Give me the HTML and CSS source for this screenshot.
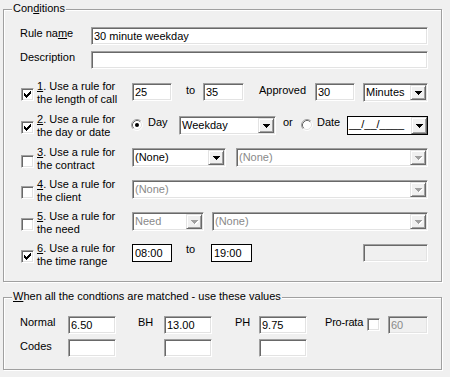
FILE: index.html
```html
<!DOCTYPE html>
<html>
<head>
<meta charset="utf-8">
<link rel="stylesheet" href="styles.css">
</head>
<body>
<div class="group conditions">
  <div class="gtitle">Con<u>d</u>itions</div>

  <div class="frow rule-row">
    <span class="flabel">Rule na<u>m</u>e</span>
    <input class="edit wide" type="text" value="30 minute weekday">
  </div>
  <div class="frow desc-row">
    <span class="flabel">Description</span>
    <input class="edit wide" type="text" value="">
  </div>

  <!-- 1 -->
  <div class="crow c1">
    <span class="chk"><svg width="11" height="11" viewBox="1 1 11 11" shape-rendering="crispEdges"><path fill="#000" d="M9 3h1v1h-1zM8 4h2v1h-2zM3 5h1v1h-1zM7 5h3v1h-3zM3 6h2v1h-2zM6 6h3v1h-3zM3 7h5v1h-5zM4 8h3v1h-3zM5 9h1v1h-1z"/></svg></span>
    <span class="clabel"><u>1</u>. Use a rule for<br>the length of call</span>
    <input class="edit len-from" type="text" value="25">
    <span class="txt to1">to</span>
    <input class="edit len-to" type="text" value="35">
    <span class="txt approved">Approved</span>
    <input class="edit appr" type="text" value="30">
    <div class="combo minutes"><span class="ctext">Minutes</span><span class="cbtn"><svg width="7" height="4" viewBox="0 0 7 4" shape-rendering="crispEdges"><path fill="#000" d="M0 0h7v1h-1v1h-1v1h-1v1h-1v-1h-1v-1h-1v-1h-1z"/></svg></span></div>
  </div>

  <!-- 2 -->
  <div class="crow c2">
    <span class="chk"><svg width="11" height="11" viewBox="1 1 11 11" shape-rendering="crispEdges"><path fill="#000" d="M9 3h1v1h-1zM8 4h2v1h-2zM3 5h1v1h-1zM7 5h3v1h-3zM3 6h2v1h-2zM6 6h3v1h-3zM3 7h5v1h-5zM4 8h3v1h-3zM5 9h1v1h-1z"/></svg></span>
    <span class="clabel"><u>2</u>. Use a rule for<br>the day or date</span>
    <span class="radio r-day"><svg width="12" height="12" viewBox="0 0 12 12"><circle cx="6" cy="6" r="5" fill="#fff"/><path d="M2.11 9.89A5.5 5.5 0 0 1 9.89 2.11" fill="none" stroke="#a0a0a0"/><path d="M9.89 2.11A5.5 5.5 0 0 1 2.11 9.89" fill="none" stroke="#fff"/><path d="M2.82 9.18A4.5 4.5 0 0 1 9.18 2.82" fill="none" stroke="#696969"/><path d="M9.18 2.82A4.5 4.5 0 0 1 2.82 9.18" fill="none" stroke="#e3e3e3"/><circle cx="6" cy="6" r="2" fill="#000"/></svg></span>
    <span class="txt day">Day</span>
    <div class="combo weekday"><span class="ctext">Weekday</span><span class="cbtn"><svg width="7" height="4" viewBox="0 0 7 4" shape-rendering="crispEdges"><path fill="#000" d="M0 0h7v1h-1v1h-1v1h-1v1h-1v-1h-1v-1h-1v-1h-1z"/></svg></span></div>
    <span class="txt or">or</span>
    <span class="radio r-date"><svg width="12" height="12" viewBox="0 0 12 12"><circle cx="6" cy="6" r="5" fill="#fff"/><path d="M2.11 9.89A5.5 5.5 0 0 1 9.89 2.11" fill="none" stroke="#a0a0a0"/><path d="M9.89 2.11A5.5 5.5 0 0 1 2.11 9.89" fill="none" stroke="#fff"/><path d="M2.82 9.18A4.5 4.5 0 0 1 9.18 2.82" fill="none" stroke="#696969"/><path d="M9.18 2.82A4.5 4.5 0 0 1 2.82 9.18" fill="none" stroke="#e3e3e3"/></svg></span>
    <span class="txt date">Date</span>
    <div class="combo flat datebox"><span class="ctext">__/__/____</span><span class="cbtn"><svg width="7" height="4" viewBox="0 0 7 4" shape-rendering="crispEdges"><path fill="#000" d="M0 0h7v1h-1v1h-1v1h-1v1h-1v-1h-1v-1h-1v-1h-1z"/></svg></span></div>
  </div>

  <!-- 3 -->
  <div class="crow c3">
    <span class="chk"></span>
    <span class="clabel"><u>3</u>. Use a rule for<br>the contract</span>
    <div class="combo contract"><span class="ctext">(None)</span><span class="cbtn"><svg width="7" height="4" viewBox="0 0 7 4" shape-rendering="crispEdges"><path fill="#000" d="M0 0h7v1h-1v1h-1v1h-1v1h-1v-1h-1v-1h-1v-1h-1z"/></svg></span></div>
    <div class="combo disabled contract2"><span class="ctext">(None)</span><span class="cbtn"><svg width="8" height="5" viewBox="0 0 8 5" shape-rendering="crispEdges"><path fill="#fff" d="M1 1h7v1h-1v1h-1v1h-1v1h-1v-1h-1v-1h-1v-1h-1z"/><path fill="#a0a0a0" d="M0 0h7v1h-1v1h-1v1h-1v1h-1v-1h-1v-1h-1v-1h-1z"/></svg></span></div>
  </div>

  <!-- 4 -->
  <div class="crow c4">
    <span class="chk"></span>
    <span class="clabel"><u>4</u>. Use a rule for<br>the client</span>
    <div class="combo disabled client"><span class="ctext">(None)</span><span class="cbtn"><svg width="8" height="5" viewBox="0 0 8 5" shape-rendering="crispEdges"><path fill="#fff" d="M1 1h7v1h-1v1h-1v1h-1v1h-1v-1h-1v-1h-1v-1h-1z"/><path fill="#a0a0a0" d="M0 0h7v1h-1v1h-1v1h-1v1h-1v-1h-1v-1h-1v-1h-1z"/></svg></span></div>
  </div>

  <!-- 5 -->
  <div class="crow c5">
    <span class="chk"></span>
    <span class="clabel"><u>5</u>. Use a rule for<br>the need</span>
    <div class="combo disabled need"><span class="ctext">Need</span><span class="cbtn"><svg width="8" height="5" viewBox="0 0 8 5" shape-rendering="crispEdges"><path fill="#fff" d="M1 1h7v1h-1v1h-1v1h-1v1h-1v-1h-1v-1h-1v-1h-1z"/><path fill="#a0a0a0" d="M0 0h7v1h-1v1h-1v1h-1v1h-1v-1h-1v-1h-1v-1h-1z"/></svg></span></div>
    <div class="combo disabled need2"><span class="ctext">(None)</span><span class="cbtn"><svg width="8" height="5" viewBox="0 0 8 5" shape-rendering="crispEdges"><path fill="#fff" d="M1 1h7v1h-1v1h-1v1h-1v1h-1v-1h-1v-1h-1v-1h-1z"/><path fill="#a0a0a0" d="M0 0h7v1h-1v1h-1v1h-1v1h-1v-1h-1v-1h-1v-1h-1z"/></svg></span></div>
  </div>

  <!-- 6 -->
  <div class="crow c6">
    <span class="chk"><svg width="11" height="11" viewBox="1 1 11 11" shape-rendering="crispEdges"><path fill="#000" d="M9 3h1v1h-1zM8 4h2v1h-2zM3 5h1v1h-1zM7 5h3v1h-3zM3 6h2v1h-2zM6 6h3v1h-3zM3 7h5v1h-5zM4 8h3v1h-3zM5 9h1v1h-1z"/></svg></span>
    <span class="clabel"><u>6</u>. Use a rule for<br>the time range</span>
    <input class="edit flat time-from" type="text" value="08:00">
    <span class="txt to6">to</span>
    <input class="edit flat time-to" type="text" value="19:00">
    <input class="edit disabled time-extra" type="text" value="" disabled>
  </div>
</div>

<div class="group values">
  <div class="gtitle"><u>W</u>hen all the condtions are matched - use these values</div>
  <div class="vrow vfirst">
    <span class="vlabel normal">Normal</span>
    <input class="edit val" type="text" value="6.50">
    <span class="vlabel bh">BH</span>
    <input class="edit val" type="text" value="13.00">
    <span class="vlabel ph">PH</span>
    <input class="edit val" type="text" value="9.75">
    <span class="vlabel prorata">Pro-rata</span>
    <span class="chk pchk"></span>
    <input class="edit disabled prorata-val" type="text" value="60" disabled>
  </div>
  <div class="vrow vsecond">
    <span class="vlabel normal codes">Codes</span>
    <input class="edit val" type="text" value="">
    <input class="edit val code2" type="text" value="">
    <input class="edit val code3" type="text" value="">
  </div>
</div>
</body>
</html>
```

FILE: styles.css
```css
html, body {
  margin: 0;
  background: #f0f0f0;
}
body {
  padding: 9px 0 0 3px;
  font-family: "Liberation Sans", Arial, sans-serif;
  font-size: 11px;
  line-height: 13px;
  color: #000;
  width: 447px;
  height: 368px;
  overflow: hidden;
}
u { text-decoration: underline; text-underline-offset: 1px; }

/* group boxes */
.group {
  box-sizing: border-box;
  width: 439px;
  border: 1px solid #a0a0a0;
  box-shadow: inset 1px 1px 0 #fff, 1px 1px 0 #fff;
}
.conditions { padding-bottom: 7px; }
.values { margin-top: 15px; padding-bottom: 12px; }
.gtitle {
  display: table;
  margin: -8px 0 0 8px;
  padding: 0 1px;
  background: #f0f0f0;
  line-height: 13px;
  white-space: nowrap;
}

/* plain form rows */
.frow {
  display: flex;
  align-items: flex-start;
  padding-left: 16px;
  height: 18px;
}
.rule-row { margin-top: 12px; }
.desc-row { margin-top: 6px; }
.flabel { width: 71px; flex-shrink: 0; }

/* edits */
.edit {
  -webkit-appearance: none;
  appearance: none;
  box-sizing: border-box;
  margin: 0;
  height: 18px;
  padding: 0 0 0 2px;
  border: 1px solid;
  border-color: #a0a0a0 #fff #fff #a0a0a0;
  box-shadow: inset 1px 1px 0 #696969, inset -1px -1px 0 #e3e3e3;
  background: #fff;
  font: inherit;
  line-height: 14px;
  color: #000;
  outline: none;
  flex-shrink: 0;
}
.edit.flat {
  border-color: #000;
  box-shadow: none;
}
.edit.disabled {
  background: #f0f0f0;
  color: #8a8a8a;
}
.wide { width: 337px; }

/* combos */
.combo {
  box-sizing: border-box;
  display: flex;
  height: 19px;
  padding: 1px;
  border: 1px solid;
  border-color: #a0a0a0 #fff #fff #a0a0a0;
  box-shadow: inset 1px 1px 0 #696969, inset -1px -1px 0 #e3e3e3;
  background: #fff;
  flex-shrink: 0;
}
.combo.flat {
  border-color: #000;
  box-shadow: none;
  padding: 0;
}
.ctext {
  flex: 1;
  padding-left: 1px;
  line-height: 15px;
  white-space: nowrap;
  overflow: hidden;
}
.cbtn {
  box-sizing: border-box;
  width: 16px;
  height: 15px;
  display: flex;
  align-items: center;
  justify-content: center;
  border: 1px solid;
  border-color: #e3e3e3 #696969 #696969 #e3e3e3;
  box-shadow: inset 1px 1px 0 #fff, inset -1px -1px 0 #a0a0a0;
  background: #f0f0f0;
}
.combo.flat .cbtn { height: 17px; }
.cbtn svg { display: block; }
.combo.disabled .ctext { color: #8a8a8a; }
.combo.disabled .cbtn svg { margin: 1px 0 0 1px; }

/* checkbox & radio */
.chk {
  box-sizing: border-box;
  display: block;
  width: 13px;
  height: 13px;
  border: 1px solid;
  border-color: #a0a0a0 #fff #fff #a0a0a0;
  box-shadow: inset 1px 1px 0 #696969, inset -1px -1px 0 #e3e3e3;
  background: #fff;
  flex-shrink: 0;
}
.chk svg { display: block; }
.radio { display: block; width: 12px; height: 12px; flex-shrink: 0; }
.radio svg { display: block; }

/* condition rows */
.crow {
  display: flex;
  align-items: flex-start;
  height: 32px;
}
.c1 { margin-top: 11px; height: 33px; }
.c2 { height: 33px; }
.crow > .chk { margin: 8px 0 0 17px; }
.c3 > .chk { margin-top: 9px; }
.clabel {
  width: 94px;
  margin-left: 3px;
  flex-shrink: 0;
  white-space: nowrap;
}
.crow > .edit, .crow > .combo { margin-top: 2px; }
.c1 > .edit, .c1 > .combo, .c2 > .combo { margin-top: 3px; }
.txt { flex-shrink: 0; white-space: nowrap; }

.len-from { margin-left: 1px; width: 40px; }
.to1 { margin: 4px 0 0 14px; width: 17px; }
.len-to { width: 41px; }
.approved { margin: 4px 0 0 15px; width: 56px; }
.appr { width: 40px; }
.minutes { margin-left: 8px; width: 65px; }

.r-day { margin-top: 6px; }
.day { margin: 3px 0 0 5px; width: 31px; }
.weekday { width: 97px; }
.or { margin: 3px 0 0 7px; width: 18px; }
.r-date { margin-top: 6px; }
.date { margin: 3px 0 0 4px; width: 30px; }
.datebox { width: 81px; }

.contract { margin-left: 1px; width: 94px; }
.contract2 { margin-left: 10px; width: 192px; }
.client { margin-left: 1px; width: 296px; }
.need { margin-left: 1px; width: 72px; }
.need2 { margin-left: 8px; width: 216px; }

.time-from { margin-left: 1px; width: 40px; }
.to6 { margin: 1px 0 0 14px; width: 25px; }
.time-to { width: 41px; }
.time-extra { margin-left: 111px; width: 65px; }

/* values rows */
.vrow {
  display: flex;
  align-items: flex-start;
  height: 18px;
  padding-left: 16px;
}
.vfirst { margin-top: 13px; }
.vsecond { margin-top: 5px; }
.vlabel { flex-shrink: 0; white-space: nowrap; }
.normal { width: 48px; }
.codes { margin-top: 1px; }
.bh { margin-left: 22px; width: 26px; }
.ph { margin-left: 23px; width: 24px; }
.prorata { margin-left: 18px; width: 42px; letter-spacing: -0.2px; }
.pchk { margin-top: 2px; }
.val { width: 48px; }
.code2 { margin-left: 48px; }
.code3 { margin-left: 47px; }
.prorata-val { margin-left: 8px; width: 40px; }
```
